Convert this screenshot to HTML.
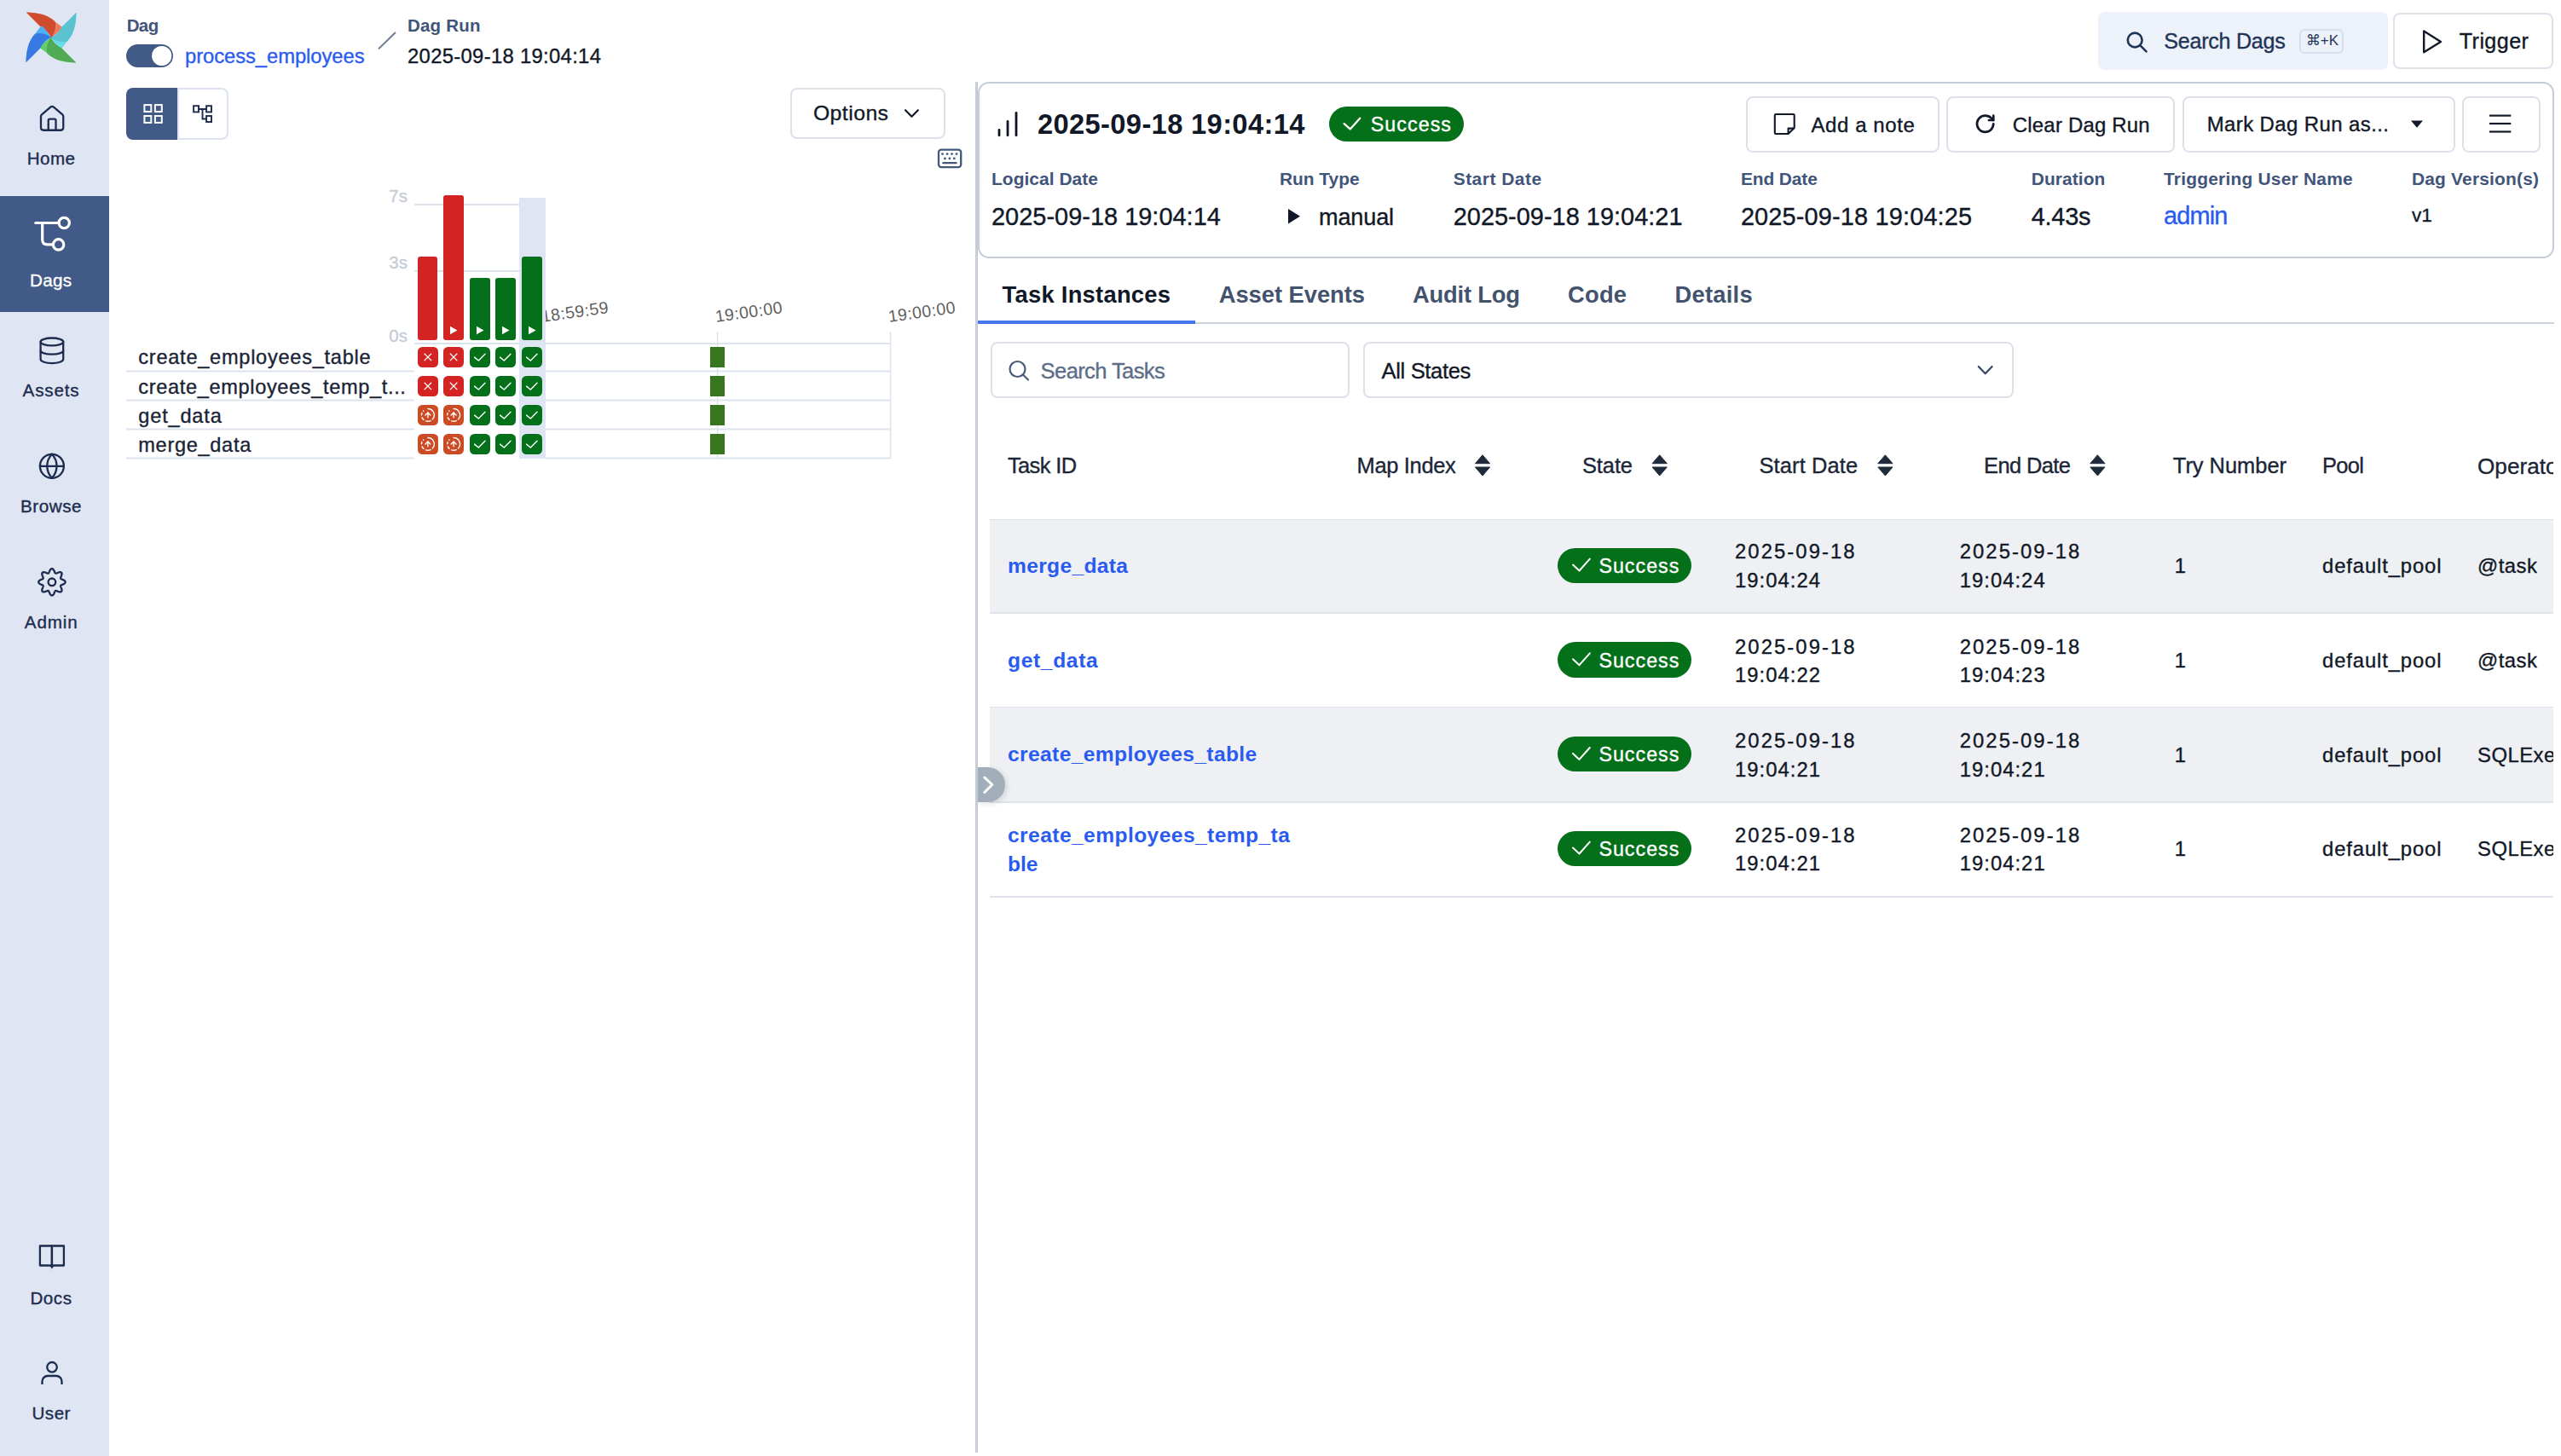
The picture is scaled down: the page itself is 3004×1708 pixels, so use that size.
<!DOCTYPE html>
<html><head><meta charset="utf-8"><title>Airflow - Dag Run</title>
<style>
html,body{margin:0;padding:0;}
body{width:3004px;height:1708px;position:relative;overflow:hidden;background:#ffffff;font-family:"Liberation Sans",sans-serif;}
.t{position:absolute;white-space:nowrap;}
.r{position:absolute;}
#clipwrap{position:absolute;left:0;top:0;width:2995px;height:1708px;overflow:hidden;}
svg.ov{position:absolute;left:0;top:0;}
</style></head><body>
<div class="r" style="left:0.00px;top:0.00px;width:128.00px;height:1708.00px;background:#dfe5f2;"></div>
<div class="r" style="left:0.00px;top:230.00px;width:128.00px;height:136.00px;background:#415a87;"></div>
<div class="t " style="left:31.80px;top:176.02px;font-size:20.64px;line-height:20.64px;letter-spacing:0.414px;color:#1c2c4e;-webkit-text-stroke:0.35px currentColor;">Home</div>
<div class="t " style="left:35.00px;top:319.02px;font-size:20.64px;line-height:20.64px;letter-spacing:0.272px;color:#ffffff;-webkit-text-stroke:0.35px currentColor;">Dags</div>
<div class="t " style="left:26.60px;top:447.92px;font-size:20.64px;line-height:20.64px;letter-spacing:0.812px;color:#1c2c4e;-webkit-text-stroke:0.35px currentColor;">Assets</div>
<div class="t " style="left:23.90px;top:584.32px;font-size:20.64px;line-height:20.64px;letter-spacing:0.575px;color:#1c2c4e;-webkit-text-stroke:0.35px currentColor;">Browse</div>
<div class="t " style="left:28.80px;top:720.32px;font-size:20.64px;line-height:20.64px;letter-spacing:0.874px;color:#1c2c4e;-webkit-text-stroke:0.35px currentColor;">Admin</div>
<div class="t " style="left:35.40px;top:1512.82px;font-size:20.64px;line-height:20.64px;letter-spacing:0.525px;color:#1c2c4e;-webkit-text-stroke:0.35px currentColor;">Docs</div>
<div class="t " style="left:37.50px;top:1648.32px;font-size:20.64px;line-height:20.64px;letter-spacing:0.474px;color:#1c2c4e;-webkit-text-stroke:0.35px currentColor;">User</div>
<svg class="ov" width="3004" height="1708" viewBox="0 0 3004 1708"><g transform="translate(30 14) rotate(0 30 30)"><path fill="#ee7d5f" d="M0.8 0.5 C14 0.6 27 3.5 34.6 11.4 L42.7 17.5 Q43.6 19 42.6 20.7 L30.2 30.2 C28.5 26 23 19.5 18.3 17.9 Z"/><path fill="#d14b2f" d="M0.8 0.5 C14 0.6 27 3.5 34.6 11.4 C36 17 34.6 24 30.2 30.2 C28.5 26 23 19.5 18.3 17.9 Z"/></g><g transform="translate(30 14) rotate(90 30 30)"><path fill="#66dde9" d="M0.8 0.5 C14 0.6 27 3.5 34.6 11.4 L42.7 17.5 Q43.6 19 42.6 20.7 L30.2 30.2 C28.5 26 23 19.5 18.3 17.9 Z"/><path fill="#5bc3d0" d="M0.8 0.5 C14 0.6 27 3.5 34.6 11.4 C36 17 34.6 24 30.2 30.2 C28.5 26 23 19.5 18.3 17.9 Z"/></g><g transform="translate(30 14) rotate(180 30 30)"><path fill="#63d067" d="M0.8 0.5 C14 0.6 27 3.5 34.6 11.4 L42.7 17.5 Q43.6 19 42.6 20.7 L30.2 30.2 C28.5 26 23 19.5 18.3 17.9 Z"/><path fill="#51aa55" d="M0.8 0.5 C14 0.6 27 3.5 34.6 11.4 C36 17 34.6 24 30.2 30.2 C28.5 26 23 19.5 18.3 17.9 Z"/></g><g transform="translate(30 14) rotate(270 30 30)"><path fill="#4fb0f6" d="M0.8 0.5 C14 0.6 27 3.5 34.6 11.4 L42.7 17.5 Q43.6 19 42.6 20.7 L30.2 30.2 C28.5 26 23 19.5 18.3 17.9 Z"/><path fill="#377ae4" d="M0.8 0.5 C14 0.6 27 3.5 34.6 11.4 C36 17 34.6 24 30.2 30.2 C28.5 26 23 19.5 18.3 17.9 Z"/></g><g transform="translate(43.6 122.1) scale(1.46)" fill="none" stroke="#1c2c4e" stroke-width="1.5753424657534245" stroke-linecap="round" stroke-linejoin="round"><path d="M15 21v-8a1 1 0 0 0-1-1h-4a1 1 0 0 0-1 1v8"/><path d="M3 10a2 2 0 0 1 .709-1.528l7-5.999a2 2 0 0 1 2.582 0l7 5.999A2 2 0 0 1 21 10v9a2 2 0 0 1-2 2H5a2 2 0 0 1-2-2z"/></g><g fill="none" stroke="#ffffff" stroke-width="3.2" stroke-linecap="round" stroke-linejoin="round"><path d="M41.8 261.5 H69"/><path d="M49.7 261.5 V281 Q49.7 286.9 55.6 286.9 H62.4"/><circle cx="75.2" cy="261.5" r="6.2"/><circle cx="68.6" cy="286.9" r="6.2"/></g><g transform="translate(43.17 393.54) scale(1.478)" fill="none" stroke="#1c2c4e" stroke-width="1.556" stroke-linecap="round" stroke-linejoin="round"><ellipse cx="12" cy="5" rx="9" ry="3"/><path d="M3 5V19A9 3 0 0 0 21 19V5"/><path d="M3 12A9 3 0 0 0 21 12"/></g><g transform="translate(44.10 530.00) scale(1.400)" fill="none" stroke="#1c2c4e" stroke-width="1.643" stroke-linecap="round" stroke-linejoin="round"><circle cx="12" cy="12" r="10"/><path d="M12 2a14.5 14.5 0 0 0 0 20 14.5 14.5 0 0 0 0-20"/><path d="M2 12h20"/></g><polygon points="60.90,667.10 61.17,667.12 61.44,667.20 61.71,667.32 61.97,667.49 62.22,667.70 62.46,667.94 62.69,668.22 62.91,668.53 63.11,668.86 63.30,669.21 63.47,669.57 63.64,669.93 63.79,670.29 63.93,670.63 64.07,670.97 64.20,671.28 64.33,671.57 64.47,671.83 64.60,672.05 64.74,672.24 64.90,672.39 65.06,672.50 65.24,672.58 65.44,672.61 65.65,672.61 65.88,672.58 66.14,672.52 66.41,672.43 66.71,672.32 67.02,672.19 67.36,672.05 67.71,671.91 68.07,671.76 68.44,671.62 68.82,671.50 69.19,671.38 69.57,671.29 69.94,671.23 70.30,671.19 70.65,671.19 70.97,671.21 71.27,671.28 71.55,671.38 71.79,671.52 72.00,671.70 72.18,671.91 72.32,672.15 72.42,672.43 72.49,672.73 72.51,673.05 72.51,673.40 72.47,673.76 72.41,674.13 72.32,674.51 72.20,674.88 72.08,675.26 71.94,675.63 71.79,675.99 71.65,676.34 71.51,676.67 71.38,676.99 71.27,677.29 71.18,677.56 71.12,677.82 71.09,678.05 71.09,678.26 71.12,678.46 71.20,678.64 71.31,678.80 71.46,678.96 71.65,679.10 71.87,679.23 72.13,679.37 72.42,679.50 72.73,679.63 73.07,679.77 73.41,679.91 73.77,680.06 74.13,680.23 74.49,680.40 74.84,680.59 75.17,680.79 75.48,681.01 75.76,681.24 76.00,681.48 76.21,681.73 76.38,681.99 76.50,682.26 76.58,682.53 76.60,682.80 76.58,683.07 76.50,683.34 76.38,683.61 76.21,683.87 76.00,684.12 75.76,684.36 75.48,684.59 75.17,684.81 74.84,685.01 74.49,685.20 74.13,685.37 73.77,685.54 73.41,685.69 73.07,685.83 72.73,685.97 72.42,686.10 72.13,686.23 71.87,686.37 71.65,686.50 71.46,686.64 71.31,686.80 71.20,686.96 71.12,687.14 71.09,687.34 71.09,687.55 71.12,687.78 71.18,688.04 71.27,688.31 71.38,688.61 71.51,688.92 71.65,689.26 71.79,689.61 71.94,689.97 72.08,690.34 72.20,690.72 72.32,691.09 72.41,691.47 72.47,691.84 72.51,692.20 72.51,692.55 72.49,692.87 72.42,693.17 72.32,693.45 72.18,693.69 72.00,693.90 71.79,694.08 71.55,694.22 71.27,694.32 70.97,694.39 70.65,694.41 70.30,694.41 69.94,694.37 69.57,694.31 69.19,694.22 68.82,694.10 68.44,693.98 68.07,693.84 67.71,693.69 67.36,693.55 67.02,693.41 66.71,693.28 66.41,693.17 66.14,693.08 65.88,693.02 65.65,692.99 65.44,692.99 65.24,693.02 65.06,693.10 64.90,693.21 64.74,693.36 64.60,693.55 64.47,693.77 64.33,694.03 64.20,694.32 64.07,694.63 63.93,694.97 63.79,695.31 63.64,695.67 63.47,696.03 63.30,696.39 63.11,696.74 62.91,697.07 62.69,697.38 62.46,697.66 62.22,697.90 61.97,698.11 61.71,698.28 61.44,698.40 61.17,698.48 60.90,698.50 60.63,698.48 60.36,698.40 60.09,698.28 59.83,698.11 59.58,697.90 59.34,697.66 59.11,697.38 58.89,697.07 58.69,696.74 58.50,696.39 58.33,696.03 58.16,695.67 58.01,695.31 57.87,694.97 57.73,694.63 57.60,694.32 57.47,694.03 57.33,693.77 57.20,693.55 57.06,693.36 56.90,693.21 56.74,693.10 56.56,693.02 56.36,692.99 56.15,692.99 55.92,693.02 55.66,693.08 55.39,693.17 55.09,693.28 54.77,693.41 54.44,693.55 54.09,693.69 53.73,693.84 53.36,693.98 52.98,694.10 52.61,694.22 52.23,694.31 51.86,694.37 51.50,694.41 51.15,694.41 50.83,694.39 50.53,694.32 50.25,694.22 50.01,694.08 49.80,693.90 49.62,693.69 49.48,693.45 49.38,693.17 49.31,692.87 49.29,692.55 49.29,692.20 49.33,691.84 49.39,691.47 49.48,691.09 49.60,690.72 49.72,690.34 49.86,689.97 50.01,689.61 50.15,689.26 50.29,688.92 50.42,688.61 50.53,688.31 50.62,688.04 50.68,687.78 50.71,687.55 50.71,687.34 50.68,687.14 50.60,686.96 50.49,686.80 50.34,686.64 50.15,686.50 49.93,686.37 49.67,686.23 49.38,686.10 49.07,685.97 48.73,685.83 48.39,685.69 48.03,685.54 47.67,685.37 47.31,685.20 46.96,685.01 46.63,684.81 46.32,684.59 46.04,684.36 45.80,684.12 45.59,683.87 45.42,683.61 45.30,683.34 45.22,683.07 45.20,682.80 45.22,682.53 45.30,682.26 45.42,681.99 45.59,681.73 45.80,681.48 46.04,681.24 46.32,681.01 46.63,680.79 46.96,680.59 47.31,680.40 47.67,680.23 48.03,680.06 48.39,679.91 48.73,679.77 49.07,679.63 49.38,679.50 49.67,679.37 49.93,679.23 50.15,679.10 50.34,678.96 50.49,678.80 50.60,678.64 50.68,678.46 50.71,678.26 50.71,678.05 50.68,677.82 50.62,677.56 50.53,677.29 50.42,676.99 50.29,676.67 50.15,676.34 50.01,675.99 49.86,675.63 49.72,675.26 49.60,674.88 49.48,674.51 49.39,674.13 49.33,673.76 49.29,673.40 49.29,673.05 49.31,672.73 49.38,672.43 49.48,672.15 49.62,671.91 49.80,671.70 50.01,671.52 50.25,671.38 50.53,671.28 50.83,671.21 51.15,671.19 51.50,671.19 51.86,671.23 52.23,671.29 52.61,671.38 52.98,671.50 53.36,671.62 53.73,671.76 54.09,671.91 54.44,672.05 54.77,672.19 55.09,672.32 55.39,672.43 55.66,672.52 55.92,672.58 56.15,672.61 56.36,672.61 56.56,672.58 56.74,672.50 56.90,672.39 57.06,672.24 57.20,672.05 57.33,671.83 57.47,671.57 57.60,671.28 57.73,670.97 57.87,670.63 58.01,670.29 58.16,669.93 58.33,669.57 58.50,669.21 58.69,668.86 58.89,668.53 59.11,668.22 59.34,667.94 59.58,667.70 59.83,667.49 60.09,667.32 60.36,667.20 60.63,667.12 60.90,667.10" fill="none" stroke="#1c2c4e" stroke-width="2.3" stroke-linejoin="round"/><circle cx="60.9" cy="682.8" r="4.3" fill="none" stroke="#1c2c4e" stroke-width="2.3"/><g fill="none" stroke="#1c2c4e" stroke-width="2.3" stroke-linejoin="round"><path d="M46.9 1461.5 H60.9 V1484.5 H46.9 Z"/><path d="M60.9 1461.5 H74.9 V1484.5 H60.9 Z"/></g><path d="M58.4 1485 L60.9 1488.5 L63.4 1485 Z" fill="#1c2c4e"/><g fill="none" stroke="#1c2c4e" stroke-width="2.3" stroke-linecap="butt"><circle cx="61" cy="1603.8" r="5.8"/><path d="M49.5 1624 V1620.5 A6.5 6.5 0 0 1 56 1614 H66 A6.5 6.5 0 0 1 72.5 1620.5 V1624"/></g></svg>
<div class="t " style="left:148.70px;top:20.45px;font-size:20.49px;line-height:20.49px;letter-spacing:-0.609px;color:#41547a;font-weight:700;">Dag</div>
<div class="t " style="left:478.00px;top:20.45px;font-size:20.49px;line-height:20.49px;letter-spacing:0.208px;color:#41547a;font-weight:700;">Dag Run</div>
<div class="r" style="left:148.00px;top:52.00px;width:55.00px;height:27.00px;background:#415a87;border-radius:14px;"></div>
<svg class="ov" width="3004" height="1708" viewBox="0 0 3004 1708"><circle cx="189.7" cy="65.5" r="11.6" fill="#ffffff"/></svg>
<div class="t " style="left:217.00px;top:53.65px;font-size:23.80px;line-height:23.80px;letter-spacing:-0.067px;color:#2a5bf0;-webkit-text-stroke:0.35px currentColor;">process_employees</div>
<svg class="ov" width="3004" height="1708" viewBox="0 0 3004 1708"><line x1="444" y1="57.4" x2="464" y2="38" stroke="#6b7a90" stroke-width="2"/></svg>
<div class="t " style="left:478.00px;top:53.62px;font-size:23.84px;line-height:23.84px;letter-spacing:0.314px;color:#111827;-webkit-text-stroke:0.35px currentColor;">2025-09-18 19:04:14</div>
<div class="r" style="left:148.00px;top:103.00px;width:61.00px;height:60.50px;background:#415a87;border-radius:8px 0 0 8px;"></div>
<div class="r" style="left:207.80px;top:103.00px;width:60.20px;height:60.50px;border:2px solid #dbe3f3;box-sizing:border-box;border-radius:0 8px 8px 0;border-left-width:2px;"></div>
<svg class="ov" width="3004" height="1708" viewBox="0 0 3004 1708"><rect x="169.4" y="123.1" width="7.9" height="7.9" fill="none" stroke="#fff" stroke-width="2"/><rect x="181.9" y="123.1" width="7.9" height="7.9" fill="none" stroke="#fff" stroke-width="2"/><rect x="169.4" y="136" width="7.9" height="7.9" fill="none" stroke="#fff" stroke-width="2"/><rect x="181.9" y="136" width="7.9" height="7.9" fill="none" stroke="#fff" stroke-width="2"/><g fill="none" stroke="#1c2c4e" stroke-width="1.9"><rect x="227.1" y="124.2" width="5.9" height="7.2"/><rect x="242.1" y="124.2" width="5.9" height="7.2"/><rect x="242.1" y="136" width="5.9" height="7"/><path d="M233 128 H242.1 M237.5 128 V139.5 H242.1"/></g></svg>
<div class="r" style="left:927.40px;top:103.40px;width:182.10px;height:60.00px;border:2px solid #dde2ea;box-sizing:border-box;border-radius:8px;"></div>
<div class="t " style="left:953.90px;top:120.88px;font-size:24.71px;line-height:24.71px;letter-spacing:0.491px;color:#111827;-webkit-text-stroke:0.35px currentColor;">Options</div>
<svg class="ov" width="3004" height="1708" viewBox="0 0 3004 1708"><path d="M1062 129.2 L1069.4 136.8 L1076.8 129.2" fill="none" stroke="#111827" stroke-width="2.2" stroke-linecap="round" stroke-linejoin="round"/><g fill="none" stroke="#41587a" stroke-width="2.3"><rect x="1101" y="175.7" width="26.2" height="20.4" rx="3"/><path d="M1106.3 191.2 H1121.6" stroke-linecap="round"/></g><circle cx="1105.5" cy="180.6" r="1.4" fill="#41587a"/><circle cx="1111.1" cy="180.6" r="1.4" fill="#41587a"/><circle cx="1116.5" cy="180.6" r="1.4" fill="#41587a"/><circle cx="1122" cy="180.6" r="1.4" fill="#41587a"/><circle cx="1108.4" cy="185.9" r="1.4" fill="#41587a"/><circle cx="1113.9" cy="185.9" r="1.4" fill="#41587a"/><circle cx="1119.3" cy="185.9" r="1.4" fill="#41587a"/></svg>
<div class="t " style="left:456.35px;top:220.34px;font-size:20.50px;line-height:20.50px;letter-spacing:0.000px;color:#c5ccd8;-webkit-text-stroke:0.35px currentColor;">7s</div>
<div class="t " style="left:456.35px;top:298.34px;font-size:20.50px;line-height:20.50px;letter-spacing:0.000px;color:#c5ccd8;-webkit-text-stroke:0.35px currentColor;">3s</div>
<div class="t " style="left:456.35px;top:383.54px;font-size:20.50px;line-height:20.50px;letter-spacing:0.000px;color:#c5ccd8;-webkit-text-stroke:0.35px currentColor;">0s</div>
<svg class="ov" width="3004" height="1708" viewBox="0 0 3004 1708"><line x1="486" y1="240" x2="609" y2="240" stroke="#dde3ec" stroke-width="2"/><line x1="486" y1="318" x2="609" y2="318" stroke="#dde3ec" stroke-width="2"/></svg>
<div class="t" style="left:635.5px;top:362.4px;font-size:19.6px;line-height:19.6px;color:#5f5f5f;transform-origin:0 16.6px;transform:rotate(-8deg);letter-spacing:0.4px">18:59:59</div>
<div class="t" style="left:840px;top:361.9px;font-size:19.6px;line-height:19.6px;color:#5f5f5f;transform-origin:0 16.6px;transform:rotate(-8deg);letter-spacing:0.4px">19:00:00</div>
<div class="t" style="left:1042.5px;top:361.9px;font-size:19.6px;line-height:19.6px;color:#5f5f5f;transform-origin:0 16.6px;transform:rotate(-8deg);letter-spacing:0.4px">19:00:00</div>
<div class="r" style="left:609.00px;top:232.00px;width:30.50px;height:306.00px;background:#dfe5f2;"></div>
<div class="r" style="left:490.00px;top:301.00px;width:23.00px;height:97.80px;background:#d42323;border-radius:3px;"></div>
<div class="r" style="left:520.00px;top:229.00px;width:24.00px;height:169.80px;background:#d42323;border-radius:3px;"></div>
<svg class="ov" width="3004" height="1708" viewBox="0 0 3004 1708"><path d="M528.0 382.8 L536.5 387.5 L528.0 392.2 Z" fill="#fff"/></svg>
<div class="r" style="left:551.00px;top:326.00px;width:24.00px;height:72.80px;background:#05701a;border-radius:3px;"></div>
<svg class="ov" width="3004" height="1708" viewBox="0 0 3004 1708"><path d="M559.0 382.8 L567.5 387.5 L559.0 392.2 Z" fill="#fff"/></svg>
<div class="r" style="left:581.00px;top:326.00px;width:24.00px;height:72.80px;background:#05701a;border-radius:3px;"></div>
<svg class="ov" width="3004" height="1708" viewBox="0 0 3004 1708"><path d="M589.0 382.8 L597.5 387.5 L589.0 392.2 Z" fill="#fff"/></svg>
<div class="r" style="left:612.00px;top:301.00px;width:24.00px;height:97.80px;background:#05701a;border-radius:3px;"></div>
<svg class="ov" width="3004" height="1708" viewBox="0 0 3004 1708"><path d="M620.0 382.8 L628.5 387.5 L620.0 392.2 Z" fill="#fff"/><line x1="486" y1="403" x2="609" y2="403" stroke="#dde3ec" stroke-width="2"/><line x1="639.5" y1="403" x2="1045" y2="403" stroke="#dde3ec" stroke-width="2"/><line x1="148" y1="435.5" x2="486" y2="435.5" stroke="#dde3ec" stroke-width="2"/><line x1="639.5" y1="435.5" x2="1045" y2="435.5" stroke="#dde3ec" stroke-width="2"/><line x1="148" y1="469.5" x2="486" y2="469.5" stroke="#dde3ec" stroke-width="2"/><line x1="639.5" y1="469.5" x2="1045" y2="469.5" stroke="#dde3ec" stroke-width="2"/><line x1="148" y1="503.5" x2="486" y2="503.5" stroke="#dde3ec" stroke-width="2"/><line x1="639.5" y1="503.5" x2="1045" y2="503.5" stroke="#dde3ec" stroke-width="2"/><line x1="148" y1="537.5" x2="486" y2="537.5" stroke="#dde3ec" stroke-width="2"/><line x1="639.5" y1="537.5" x2="1045" y2="537.5" stroke="#dde3ec" stroke-width="2"/><line x1="841.6" y1="389" x2="841.6" y2="537" stroke="#dde3ec" stroke-width="1.5"/><line x1="1044.5" y1="389" x2="1044.5" y2="537" stroke="#dde3ec" stroke-width="1.5"/></svg>
<div class="t " style="left:162.30px;top:408.02px;font-size:23.60px;line-height:23.60px;letter-spacing:0.726px;color:#1a2436;-webkit-text-stroke:0.35px currentColor;">create_employees_table</div>
<div class="t " style="left:162.30px;top:442.52px;font-size:23.60px;line-height:23.60px;letter-spacing:0.636px;color:#1a2436;-webkit-text-stroke:0.35px currentColor;">create_employees_temp_t...</div>
<div class="t " style="left:162.30px;top:476.62px;font-size:23.60px;line-height:23.60px;letter-spacing:0.805px;color:#1a2436;-webkit-text-stroke:0.35px currentColor;">get_data</div>
<div class="t " style="left:162.30px;top:510.72px;font-size:23.60px;line-height:23.60px;letter-spacing:0.672px;color:#1a2436;-webkit-text-stroke:0.35px currentColor;">merge_data</div>
<div class="r" style="left:490.00px;top:407.00px;width:23.80px;height:23.80px;background:#d42323;border-radius:5.5px;"></div>
<svg class="ov" width="3004" height="1708" viewBox="0 0 3004 1708"><path d="M497.7 414.7 L506.1 423.1 M506.1 414.7 L497.7 423.1" stroke="#fff" stroke-width="1.3" fill="none"/></svg>
<div class="r" style="left:520.20px;top:407.00px;width:23.80px;height:23.80px;background:#d42323;border-radius:5.5px;"></div>
<svg class="ov" width="3004" height="1708" viewBox="0 0 3004 1708"><path d="M527.9 414.7 L536.3 423.1 M536.3 414.7 L527.9 423.1" stroke="#fff" stroke-width="1.3" fill="none"/></svg>
<div class="r" style="left:551.00px;top:407.00px;width:23.80px;height:23.80px;background:#05701a;border-radius:5.5px;"></div>
<svg class="ov" width="3004" height="1708" viewBox="0 0 3004 1708"><path d="M556.6 419.1 L561.3 423.0 L569.0 415.3" stroke="#fff" stroke-width="1.4" fill="none" stroke-linecap="round" stroke-linejoin="round"/></svg>
<div class="r" style="left:581.00px;top:407.00px;width:23.80px;height:23.80px;background:#05701a;border-radius:5.5px;"></div>
<svg class="ov" width="3004" height="1708" viewBox="0 0 3004 1708"><path d="M586.6 419.1 L591.3 423.0 L599.0 415.3" stroke="#fff" stroke-width="1.4" fill="none" stroke-linecap="round" stroke-linejoin="round"/></svg>
<div class="r" style="left:612.00px;top:407.00px;width:23.80px;height:23.80px;background:#05701a;border-radius:5.5px;"></div>
<svg class="ov" width="3004" height="1708" viewBox="0 0 3004 1708"><path d="M617.6 419.1 L622.3 423.0 L630.0 415.3" stroke="#fff" stroke-width="1.4" fill="none" stroke-linecap="round" stroke-linejoin="round"/></svg>
<div class="r" style="left:490.00px;top:441.00px;width:23.80px;height:23.80px;background:#d42323;border-radius:5.5px;"></div>
<svg class="ov" width="3004" height="1708" viewBox="0 0 3004 1708"><path d="M497.7 448.7 L506.1 457.1 M506.1 448.7 L497.7 457.1" stroke="#fff" stroke-width="1.3" fill="none"/></svg>
<div class="r" style="left:520.20px;top:441.00px;width:23.80px;height:23.80px;background:#d42323;border-radius:5.5px;"></div>
<svg class="ov" width="3004" height="1708" viewBox="0 0 3004 1708"><path d="M527.9 448.7 L536.3 457.1 M536.3 448.7 L527.9 457.1" stroke="#fff" stroke-width="1.3" fill="none"/></svg>
<div class="r" style="left:551.00px;top:441.00px;width:23.80px;height:23.80px;background:#05701a;border-radius:5.5px;"></div>
<svg class="ov" width="3004" height="1708" viewBox="0 0 3004 1708"><path d="M556.6 453.1 L561.3 457.0 L569.0 449.3" stroke="#fff" stroke-width="1.4" fill="none" stroke-linecap="round" stroke-linejoin="round"/></svg>
<div class="r" style="left:581.00px;top:441.00px;width:23.80px;height:23.80px;background:#05701a;border-radius:5.5px;"></div>
<svg class="ov" width="3004" height="1708" viewBox="0 0 3004 1708"><path d="M586.6 453.1 L591.3 457.0 L599.0 449.3" stroke="#fff" stroke-width="1.4" fill="none" stroke-linecap="round" stroke-linejoin="round"/></svg>
<div class="r" style="left:612.00px;top:441.00px;width:23.80px;height:23.80px;background:#05701a;border-radius:5.5px;"></div>
<svg class="ov" width="3004" height="1708" viewBox="0 0 3004 1708"><path d="M617.6 453.1 L622.3 457.0 L630.0 449.3" stroke="#fff" stroke-width="1.4" fill="none" stroke-linecap="round" stroke-linejoin="round"/></svg>
<div class="r" style="left:490.00px;top:475.00px;width:23.80px;height:23.80px;background:#cc4b24;border-radius:5.5px;"></div>
<svg class="ov" width="3004" height="1708" viewBox="0 0 3004 1708"><g transform="translate(493.02 478.02) scale(0.74)" fill="none" stroke="#fff" stroke-width="1.9" stroke-linecap="round" stroke-linejoin="round"><path d="M12 2a10 10 0 0 1 7.38 16.75"/><path d="m16 12-4-4-4 4"/><path d="M12 16V8"/><path d="M2.5 8.875a10 10 0 0 0-.5 3"/><path d="M2.83 16a10 10 0 0 0 2.43 3.4"/><path d="M4.636 5.235a.5.5 0 0 1 .5.5"/><path d="M8.644 21.42a10 10 0 0 0 7.631-.38"/></g></svg>
<div class="r" style="left:520.20px;top:475.00px;width:23.80px;height:23.80px;background:#cc4b24;border-radius:5.5px;"></div>
<svg class="ov" width="3004" height="1708" viewBox="0 0 3004 1708"><g transform="translate(523.22 478.02) scale(0.74)" fill="none" stroke="#fff" stroke-width="1.9" stroke-linecap="round" stroke-linejoin="round"><path d="M12 2a10 10 0 0 1 7.38 16.75"/><path d="m16 12-4-4-4 4"/><path d="M12 16V8"/><path d="M2.5 8.875a10 10 0 0 0-.5 3"/><path d="M2.83 16a10 10 0 0 0 2.43 3.4"/><path d="M4.636 5.235a.5.5 0 0 1 .5.5"/><path d="M8.644 21.42a10 10 0 0 0 7.631-.38"/></g></svg>
<div class="r" style="left:551.00px;top:475.00px;width:23.80px;height:23.80px;background:#05701a;border-radius:5.5px;"></div>
<svg class="ov" width="3004" height="1708" viewBox="0 0 3004 1708"><path d="M556.6 487.1 L561.3 491.0 L569.0 483.3" stroke="#fff" stroke-width="1.4" fill="none" stroke-linecap="round" stroke-linejoin="round"/></svg>
<div class="r" style="left:581.00px;top:475.00px;width:23.80px;height:23.80px;background:#05701a;border-radius:5.5px;"></div>
<svg class="ov" width="3004" height="1708" viewBox="0 0 3004 1708"><path d="M586.6 487.1 L591.3 491.0 L599.0 483.3" stroke="#fff" stroke-width="1.4" fill="none" stroke-linecap="round" stroke-linejoin="round"/></svg>
<div class="r" style="left:612.00px;top:475.00px;width:23.80px;height:23.80px;background:#05701a;border-radius:5.5px;"></div>
<svg class="ov" width="3004" height="1708" viewBox="0 0 3004 1708"><path d="M617.6 487.1 L622.3 491.0 L630.0 483.3" stroke="#fff" stroke-width="1.4" fill="none" stroke-linecap="round" stroke-linejoin="round"/></svg>
<div class="r" style="left:490.00px;top:509.00px;width:23.80px;height:23.80px;background:#cc4b24;border-radius:5.5px;"></div>
<svg class="ov" width="3004" height="1708" viewBox="0 0 3004 1708"><g transform="translate(493.02 512.02) scale(0.74)" fill="none" stroke="#fff" stroke-width="1.9" stroke-linecap="round" stroke-linejoin="round"><path d="M12 2a10 10 0 0 1 7.38 16.75"/><path d="m16 12-4-4-4 4"/><path d="M12 16V8"/><path d="M2.5 8.875a10 10 0 0 0-.5 3"/><path d="M2.83 16a10 10 0 0 0 2.43 3.4"/><path d="M4.636 5.235a.5.5 0 0 1 .5.5"/><path d="M8.644 21.42a10 10 0 0 0 7.631-.38"/></g></svg>
<div class="r" style="left:520.20px;top:509.00px;width:23.80px;height:23.80px;background:#cc4b24;border-radius:5.5px;"></div>
<svg class="ov" width="3004" height="1708" viewBox="0 0 3004 1708"><g transform="translate(523.22 512.02) scale(0.74)" fill="none" stroke="#fff" stroke-width="1.9" stroke-linecap="round" stroke-linejoin="round"><path d="M12 2a10 10 0 0 1 7.38 16.75"/><path d="m16 12-4-4-4 4"/><path d="M12 16V8"/><path d="M2.5 8.875a10 10 0 0 0-.5 3"/><path d="M2.83 16a10 10 0 0 0 2.43 3.4"/><path d="M4.636 5.235a.5.5 0 0 1 .5.5"/><path d="M8.644 21.42a10 10 0 0 0 7.631-.38"/></g></svg>
<div class="r" style="left:551.00px;top:509.00px;width:23.80px;height:23.80px;background:#05701a;border-radius:5.5px;"></div>
<svg class="ov" width="3004" height="1708" viewBox="0 0 3004 1708"><path d="M556.6 521.1 L561.3 525.0 L569.0 517.3" stroke="#fff" stroke-width="1.4" fill="none" stroke-linecap="round" stroke-linejoin="round"/></svg>
<div class="r" style="left:581.00px;top:509.00px;width:23.80px;height:23.80px;background:#05701a;border-radius:5.5px;"></div>
<svg class="ov" width="3004" height="1708" viewBox="0 0 3004 1708"><path d="M586.6 521.1 L591.3 525.0 L599.0 517.3" stroke="#fff" stroke-width="1.4" fill="none" stroke-linecap="round" stroke-linejoin="round"/></svg>
<div class="r" style="left:612.00px;top:509.00px;width:23.80px;height:23.80px;background:#05701a;border-radius:5.5px;"></div>
<svg class="ov" width="3004" height="1708" viewBox="0 0 3004 1708"><path d="M617.6 521.1 L622.3 525.0 L630.0 517.3" stroke="#fff" stroke-width="1.4" fill="none" stroke-linecap="round" stroke-linejoin="round"/></svg>
<div class="r" style="left:832.70px;top:407.00px;width:17.30px;height:24.40px;background:#37761f;"></div>
<div class="r" style="left:832.70px;top:441.00px;width:17.30px;height:24.40px;background:#37761f;"></div>
<div class="r" style="left:832.70px;top:475.00px;width:17.30px;height:24.40px;background:#37761f;"></div>
<div class="r" style="left:832.70px;top:509.00px;width:17.30px;height:24.40px;background:#37761f;"></div>
<div class="r" style="left:1144.00px;top:96.00px;width:3.00px;height:1608.00px;background:#c5cdd8;"></div>
<div class="r" style="left:1146.50px;top:96.00px;width:1849.50px;height:206.50px;border:2px solid #c6cdd9;box-sizing:border-box;border-radius:13px;"></div>
<svg class="ov" width="3004" height="1708" viewBox="0 0 3004 1708"><g stroke="#0f1523" stroke-width="2.8" stroke-linecap="round"><line x1="1172" y1="152.5" x2="1172" y2="158.8"/><line x1="1182" y1="142.5" x2="1182" y2="158.8"/><line x1="1192" y1="132.5" x2="1192" y2="158.8"/></g></svg>
<div class="t " style="left:1217.00px;top:129.81px;font-size:32.70px;line-height:32.70px;letter-spacing:0.345px;color:#111827;font-weight:700;">2025-09-18 19:04:14</div>
<div class="r" style="left:1558.80px;top:124.80px;width:158.00px;height:41.20px;background:#05701a;border-radius:21px;"></div>
<svg class="ov" width="3004" height="1708" viewBox="0 0 3004 1708"><path d="M1576.6 145.1 L1583.7 151.4 L1595.2 138.7" stroke="#fff" stroke-width="2.3" fill="none" stroke-linecap="round" stroke-linejoin="round"/></svg>
<div class="t " style="left:1607.80px;top:135.11px;font-size:23.26px;line-height:23.26px;letter-spacing:1.051px;color:#ffffff;-webkit-text-stroke:0.35px currentColor;">Success</div>
<div class="t " style="left:1163.00px;top:199.78px;font-size:20.93px;line-height:20.93px;letter-spacing:0.050px;color:#41547a;font-weight:700;">Logical Date</div>
<div class="t " style="left:1501.00px;top:199.78px;font-size:20.93px;line-height:20.93px;letter-spacing:-0.029px;color:#41547a;font-weight:700;">Run Type</div>
<div class="t " style="left:1704.70px;top:199.78px;font-size:20.93px;line-height:20.93px;letter-spacing:0.503px;color:#41547a;font-weight:700;">Start Date</div>
<div class="t " style="left:2041.90px;top:199.78px;font-size:20.93px;line-height:20.93px;letter-spacing:-0.102px;color:#41547a;font-weight:700;">End Date</div>
<div class="t " style="left:2382.80px;top:199.78px;font-size:20.93px;line-height:20.93px;letter-spacing:0.080px;color:#41547a;font-weight:700;">Duration</div>
<div class="t " style="left:2538.00px;top:199.78px;font-size:20.93px;line-height:20.93px;letter-spacing:0.220px;color:#41547a;font-weight:700;">Triggering User Name</div>
<div class="t " style="left:2829.00px;top:199.78px;font-size:20.93px;line-height:20.93px;letter-spacing:0.188px;color:#41547a;font-weight:700;">Dag Version(s)</div>
<div class="t " style="left:1163.00px;top:239.51px;font-size:28.92px;line-height:28.92px;letter-spacing:0.023px;color:#111827;-webkit-text-stroke:0.35px currentColor;">2025-09-18 19:04:14</div>
<div class="t " style="left:1704.70px;top:239.51px;font-size:28.92px;line-height:28.92px;letter-spacing:0.023px;color:#111827;-webkit-text-stroke:0.35px currentColor;">2025-09-18 19:04:21</div>
<div class="t " style="left:2041.90px;top:239.51px;font-size:28.92px;line-height:28.92px;letter-spacing:0.156px;color:#111827;-webkit-text-stroke:0.35px currentColor;">2025-09-18 19:04:25</div>
<div class="t " style="left:2382.80px;top:239.51px;font-size:28.92px;line-height:28.92px;letter-spacing:-0.265px;color:#111827;-webkit-text-stroke:0.35px currentColor;">4.43s</div>
<div class="t " style="left:1547.00px;top:241.05px;font-size:27.10px;line-height:27.10px;letter-spacing:-0.157px;color:#111827;-webkit-text-stroke:0.35px currentColor;">manual</div>
<div class="t " style="left:2538.00px;top:239.21px;font-size:28.92px;line-height:28.92px;letter-spacing:-0.821px;color:#2a5bf0;-webkit-text-stroke:0.35px currentColor;">admin</div>
<div class="t " style="left:2829.00px;top:241.10px;font-size:22.67px;line-height:22.67px;letter-spacing:0.000px;color:#111827;-webkit-text-stroke:0.35px currentColor;">v1</div>
<svg class="ov" width="3004" height="1708" viewBox="0 0 3004 1708"><path d="M1511 245 L1525 253.7 L1511 262.4 Z" fill="#111827"/></svg>
<div class="r" style="left:2047.80px;top:112.90px;width:227.00px;height:66.10px;border:2px solid #dde2ea;box-sizing:border-box;border-radius:8px;"></div>
<div class="r" style="left:2283.40px;top:112.90px;width:268.10px;height:66.10px;border:2px solid #dde2ea;box-sizing:border-box;border-radius:8px;"></div>
<div class="r" style="left:2559.70px;top:112.90px;width:320.30px;height:66.10px;border:2px solid #dde2ea;box-sizing:border-box;border-radius:8px;"></div>
<div class="r" style="left:2888.00px;top:112.90px;width:91.50px;height:66.10px;border:2px solid #dde2ea;box-sizing:border-box;border-radius:8px;"></div>
<div class="t " style="left:2124.50px;top:134.89px;font-size:23.98px;line-height:23.98px;letter-spacing:0.587px;color:#111827;-webkit-text-stroke:0.35px currentColor;">Add a note</div>
<div class="t " style="left:2360.80px;top:134.89px;font-size:23.98px;line-height:23.98px;letter-spacing:0.197px;color:#111827;-webkit-text-stroke:0.35px currentColor;">Clear Dag Run</div>
<div class="t " style="left:2588.70px;top:134.49px;font-size:23.98px;line-height:23.98px;letter-spacing:0.400px;color:#111827;-webkit-text-stroke:0.35px currentColor;">Mark Dag Run as...</div>
<svg class="ov" width="3004" height="1708" viewBox="0 0 3004 1708"><g fill="none" stroke="#111827" stroke-width="2.1" stroke-linejoin="round"><path d="M2083 134 H2103.5 A1.2 1.2 0 0 1 2104.7 135.2 V150 L2097.6 157 H2083 A1.2 1.2 0 0 1 2081.8 155.8 V135.2 A1.2 1.2 0 0 1 2083 134 Z"/><path d="M2097.6 157 V150.6 H2104.7"/></g><g transform="translate(2315.76 132.46) scale(1.07)" fill="none" stroke="#111827" stroke-width="2.523" stroke-linecap="round" stroke-linejoin="round"><path d="M21 12a9 9 0 1 1-9-9c2.52 0 4.93 1 6.74 2.74L21 8"/><path d="M21 3v5h-5"/></g><path d="M2828 141.5 H2842 L2835 149.8 Z" fill="#111827"/><g stroke="#111827" stroke-width="2.2"><line x1="2920" y1="135.6" x2="2945.3" y2="135.6"/><line x1="2920" y1="145" x2="2945.3" y2="145"/><line x1="2920" y1="154.5" x2="2945.3" y2="154.5"/></g></svg>
<div class="r" style="left:2461.00px;top:14.00px;width:340.00px;height:67.80px;background:#edf1f9;border-radius:8px;"></div>
<svg class="ov" width="3004" height="1708" viewBox="0 0 3004 1708"><g fill="none" stroke="#1f3456" stroke-width="2.6" stroke-linecap="round"><circle cx="2504.2" cy="47" r="8.4"/><line x1="2510.5" y1="53.3" x2="2517.5" y2="60.3"/></g></svg>
<div class="t " style="left:2538.30px;top:36.01px;font-size:25.15px;line-height:25.15px;letter-spacing:-0.286px;color:#1f3456;-webkit-text-stroke:0.35px currentColor;">Search Dags</div>
<div class="r" style="left:2696.60px;top:33.50px;width:52.40px;height:29.70px;border:2px solid #d5dff0;box-sizing:border-box;border-radius:6px;"></div>
<div class="t" style="left:2704.5px;top:38px;font-size:17px;line-height:20px;color:#1f3456;letter-spacing:0.2px">&#8984;+K</div>
<div class="r" style="left:2807.30px;top:14.70px;width:188.20px;height:66.40px;border:2px solid #dde2ea;box-sizing:border-box;border-radius:8px;"></div>
<svg class="ov" width="3004" height="1708" viewBox="0 0 3004 1708"><path d="M2843.2 36.5 L2863 48.9 L2843.2 61.3 Z" fill="none" stroke="#111827" stroke-width="2.4" stroke-linejoin="round"/></svg>
<div class="t " style="left:2884.80px;top:36.01px;font-size:25.15px;line-height:25.15px;letter-spacing:0.397px;color:#111827;-webkit-text-stroke:0.35px currentColor;">Trigger</div>
<div class="t " style="left:1175.60px;top:331.86px;font-size:27.33px;line-height:27.33px;letter-spacing:0.268px;color:#111827;font-weight:700;">Task Instances</div>
<div class="t " style="left:1429.70px;top:331.86px;font-size:27.33px;line-height:27.33px;letter-spacing:-0.030px;color:#43536e;font-weight:700;">Asset Events</div>
<div class="t " style="left:1657.00px;top:331.86px;font-size:27.33px;line-height:27.33px;letter-spacing:-0.185px;color:#43536e;font-weight:700;">Audit Log</div>
<div class="t " style="left:1839.00px;top:331.86px;font-size:27.33px;line-height:27.33px;letter-spacing:0.228px;color:#43536e;font-weight:700;">Code</div>
<div class="t " style="left:1964.60px;top:331.86px;font-size:27.33px;line-height:27.33px;letter-spacing:0.232px;color:#43536e;font-weight:700;">Details</div>
<div class="r" style="left:1147.00px;top:378.30px;width:1849.00px;height:2.00px;background:#ccd3dd;"></div>
<div class="r" style="left:1147.00px;top:375.60px;width:254.60px;height:4.90px;background:#4477ee;"></div>
<div class="r" style="left:1161.70px;top:400.70px;width:421.70px;height:66.70px;border:2px solid #dde2ea;box-sizing:border-box;border-radius:8px;"></div>
<svg class="ov" width="3004" height="1708" viewBox="0 0 3004 1708"><g fill="none" stroke="#4a5b78" stroke-width="2.2" stroke-linecap="round"><circle cx="1193.5" cy="433" r="9"/><line x1="1200.2" y1="439.7" x2="1206" y2="445.5"/></g></svg>
<div class="t " style="left:1220.60px;top:422.64px;font-size:25.58px;line-height:25.58px;letter-spacing:-0.627px;color:#5d6d88;-webkit-text-stroke:0.35px currentColor;">Search Tasks</div>
<div class="r" style="left:1598.70px;top:401.00px;width:763.30px;height:65.50px;border:2px solid #dde2ea;box-sizing:border-box;border-radius:8px;"></div>
<div class="t " style="left:1620.60px;top:422.94px;font-size:25.58px;line-height:25.58px;letter-spacing:-0.373px;color:#111827;-webkit-text-stroke:0.35px currentColor;">All States</div>
<svg class="ov" width="3004" height="1708" viewBox="0 0 3004 1708"><path d="M2320.8 430 L2328.7 438.3 L2336.6 430" fill="none" stroke="#344560" stroke-width="2.2" stroke-linecap="round" stroke-linejoin="round"/></svg>
<div class="t " style="left:1182.00px;top:534.46px;font-size:25.44px;line-height:25.44px;letter-spacing:-0.634px;color:#1b2536;-webkit-text-stroke:0.35px currentColor;">Task ID</div>
<div class="t " style="left:1591.60px;top:534.46px;font-size:25.44px;line-height:25.44px;letter-spacing:-0.322px;color:#1b2536;-webkit-text-stroke:0.35px currentColor;">Map Index</div>
<svg class="ov" width="3004" height="1708" viewBox="0 0 3004 1708"><path d="M1739 533.8 L1747.6 543.7 H1730.4 Z M1730.4 548 H1747.6 L1739 558 Z" fill="#1f2a3a" stroke="#1f2a3a" stroke-width="1" stroke-linejoin="round"/></svg>
<div class="t " style="left:1856.00px;top:534.46px;font-size:25.44px;line-height:25.44px;letter-spacing:-0.098px;color:#1b2536;-webkit-text-stroke:0.35px currentColor;">State</div>
<svg class="ov" width="3004" height="1708" viewBox="0 0 3004 1708"><path d="M1946.7 533.8 L1955.3 543.7 H1938.1000000000001 Z M1938.1000000000001 548 H1955.3 L1946.7 558 Z" fill="#1f2a3a" stroke="#1f2a3a" stroke-width="1" stroke-linejoin="round"/></svg>
<div class="t " style="left:2063.50px;top:534.46px;font-size:25.44px;line-height:25.44px;letter-spacing:0.121px;color:#1b2536;-webkit-text-stroke:0.35px currentColor;">Start Date</div>
<svg class="ov" width="3004" height="1708" viewBox="0 0 3004 1708"><path d="M2211.4 533.8 L2220.0 543.7 H2202.8 Z M2202.8 548 H2220.0 L2211.4 558 Z" fill="#1f2a3a" stroke="#1f2a3a" stroke-width="1" stroke-linejoin="round"/></svg>
<div class="t " style="left:2327.00px;top:534.46px;font-size:25.44px;line-height:25.44px;letter-spacing:-0.579px;color:#1b2536;-webkit-text-stroke:0.35px currentColor;">End Date</div>
<svg class="ov" width="3004" height="1708" viewBox="0 0 3004 1708"><path d="M2460.4 533.8 L2469.0 543.7 H2451.8 Z M2451.8 548 H2469.0 L2460.4 558 Z" fill="#1f2a3a" stroke="#1f2a3a" stroke-width="1" stroke-linejoin="round"/></svg>
<div class="t " style="left:2548.80px;top:534.46px;font-size:25.44px;line-height:25.44px;letter-spacing:-0.013px;color:#1b2536;-webkit-text-stroke:0.35px currentColor;">Try Number</div>
<div class="t " style="left:2724.00px;top:534.46px;font-size:25.44px;line-height:25.44px;letter-spacing:-0.637px;color:#1b2536;-webkit-text-stroke:0.35px currentColor;">Pool</div>
<div class="r" style="left:2906px;top:520px;width:89px;height:50px;overflow:hidden">
<div class="t " style="left:0.00px;top:13.85px;font-size:26.16px;line-height:26.16px;letter-spacing:0.000px;color:#1b2536;-webkit-text-stroke:0.35px currentColor;">Operator</div>
</div>
<div class="r" style="left:1161.00px;top:609.40px;width:1834.00px;height:109.30px;background:#eef0f4;"></div>
<div class="r" style="left:1161.00px;top:717.70px;width:1834.00px;height:2.00px;background:#dfe3ea;"></div>
<div class="r" style="left:1161.00px;top:828.50px;width:1834.00px;height:2.00px;background:#dfe3ea;"></div>
<div class="r" style="left:1161.00px;top:829.50px;width:1834.00px;height:111.20px;background:#eef0f4;"></div>
<div class="r" style="left:1161.00px;top:939.70px;width:1834.00px;height:2.00px;background:#dfe3ea;"></div>
<div class="r" style="left:1161.00px;top:1051.40px;width:1834.00px;height:2.00px;background:#dfe3ea;"></div>
<div class="r" style="left:1161.00px;top:608.60px;width:1834.00px;height:1.30px;background:#dfe3ea;"></div>
<div class="t " style="left:1182.00px;top:652.17px;font-size:24.60px;line-height:24.60px;letter-spacing:0.322px;color:#2a5bf0;font-weight:700;">merge_data</div>
<div class="r" style="left:1826.60px;top:643.00px;width:157.90px;height:40.50px;background:#05701a;border-radius:21px;"></div>
<svg class="ov" width="3004" height="1708" viewBox="0 0 3004 1708"><path d="M1845.0 662.6 L1852.5 669.5 L1864.8 655.6" stroke="#fff" stroke-width="2.0" fill="none" stroke-linecap="round" stroke-linejoin="round"/></svg>
<div class="t " style="left:1875.40px;top:652.86px;font-size:23.26px;line-height:23.26px;letter-spacing:1.018px;color:#ffffff;-webkit-text-stroke:0.35px currentColor;">Success</div>
<div class="t " style="left:2035.00px;top:634.82px;font-size:23.84px;line-height:23.84px;letter-spacing:2.074px;color:#111827;-webkit-text-stroke:0.35px currentColor;">2025-09-18</div>
<div class="t " style="left:2035.00px;top:668.82px;font-size:23.84px;line-height:23.84px;letter-spacing:1.030px;color:#111827;-webkit-text-stroke:0.35px currentColor;">19:04:24</div>
<div class="t " style="left:2298.70px;top:634.82px;font-size:23.84px;line-height:23.84px;letter-spacing:2.074px;color:#111827;-webkit-text-stroke:0.35px currentColor;">2025-09-18</div>
<div class="t " style="left:2298.70px;top:668.82px;font-size:23.84px;line-height:23.84px;letter-spacing:1.030px;color:#111827;-webkit-text-stroke:0.35px currentColor;">19:04:24</div>
<div class="t " style="left:2550.80px;top:651.82px;font-size:23.84px;line-height:23.84px;letter-spacing:0.000px;color:#111827;-webkit-text-stroke:0.35px currentColor;">1</div>
<div class="t " style="left:2724.00px;top:651.82px;font-size:23.84px;line-height:23.84px;letter-spacing:0.882px;color:#111827;-webkit-text-stroke:0.35px currentColor;">default_pool</div>
<div class="r" style="left:2906px;top:642px;width:89px;height:40px;overflow:hidden">
<div class="t " style="left:0.00px;top:9.82px;font-size:23.84px;line-height:23.84px;letter-spacing:0.000px;color:#111827;-webkit-text-stroke:0.35px currentColor;letter-spacing:0.5px;">@task</div>
</div>
<div class="t " style="left:1182.00px;top:763.47px;font-size:24.60px;line-height:24.60px;letter-spacing:0.647px;color:#2a5bf0;font-weight:700;">get_data</div>
<div class="r" style="left:1826.60px;top:753.00px;width:157.90px;height:41.80px;background:#05701a;border-radius:21px;"></div>
<svg class="ov" width="3004" height="1708" viewBox="0 0 3004 1708"><path d="M1845.0 773.2 L1852.5 780.2 L1864.8 766.3" stroke="#fff" stroke-width="2.0" fill="none" stroke-linecap="round" stroke-linejoin="round"/></svg>
<div class="t " style="left:1875.40px;top:763.51px;font-size:23.26px;line-height:23.26px;letter-spacing:1.018px;color:#ffffff;-webkit-text-stroke:0.35px currentColor;">Success</div>
<div class="t " style="left:2035.00px;top:746.82px;font-size:23.84px;line-height:23.84px;letter-spacing:2.074px;color:#111827;-webkit-text-stroke:0.35px currentColor;">2025-09-18</div>
<div class="t " style="left:2035.00px;top:780.22px;font-size:23.84px;line-height:23.84px;letter-spacing:1.030px;color:#111827;-webkit-text-stroke:0.35px currentColor;">19:04:22</div>
<div class="t " style="left:2298.70px;top:746.82px;font-size:23.84px;line-height:23.84px;letter-spacing:2.074px;color:#111827;-webkit-text-stroke:0.35px currentColor;">2025-09-18</div>
<div class="t " style="left:2298.70px;top:780.22px;font-size:23.84px;line-height:23.84px;letter-spacing:1.030px;color:#111827;-webkit-text-stroke:0.35px currentColor;">19:04:23</div>
<div class="t " style="left:2550.80px;top:763.32px;font-size:23.84px;line-height:23.84px;letter-spacing:0.000px;color:#111827;-webkit-text-stroke:0.35px currentColor;">1</div>
<div class="t " style="left:2724.00px;top:763.32px;font-size:23.84px;line-height:23.84px;letter-spacing:0.882px;color:#111827;-webkit-text-stroke:0.35px currentColor;">default_pool</div>
<div class="r" style="left:2906px;top:753.5px;width:89px;height:40px;overflow:hidden">
<div class="t " style="left:0.00px;top:9.82px;font-size:23.84px;line-height:23.84px;letter-spacing:0.000px;color:#111827;-webkit-text-stroke:0.35px currentColor;letter-spacing:0.5px;">@task</div>
</div>
<div class="t " style="left:1182.00px;top:873.17px;font-size:24.60px;line-height:24.60px;letter-spacing:0.374px;color:#2a5bf0;font-weight:700;">create_employees_table</div>
<div class="r" style="left:1826.60px;top:863.80px;width:157.90px;height:41.60px;background:#05701a;border-radius:21px;"></div>
<svg class="ov" width="3004" height="1708" viewBox="0 0 3004 1708"><path d="M1845.0 883.9 L1852.5 890.9 L1864.8 877.0" stroke="#fff" stroke-width="2.0" fill="none" stroke-linecap="round" stroke-linejoin="round"/></svg>
<div class="t " style="left:1875.40px;top:874.21px;font-size:23.26px;line-height:23.26px;letter-spacing:1.018px;color:#ffffff;-webkit-text-stroke:0.35px currentColor;">Success</div>
<div class="t " style="left:2035.00px;top:856.62px;font-size:23.84px;line-height:23.84px;letter-spacing:2.074px;color:#111827;-webkit-text-stroke:0.35px currentColor;">2025-09-18</div>
<div class="t " style="left:2035.00px;top:890.82px;font-size:23.84px;line-height:23.84px;letter-spacing:1.030px;color:#111827;-webkit-text-stroke:0.35px currentColor;">19:04:21</div>
<div class="t " style="left:2298.70px;top:856.62px;font-size:23.84px;line-height:23.84px;letter-spacing:2.074px;color:#111827;-webkit-text-stroke:0.35px currentColor;">2025-09-18</div>
<div class="t " style="left:2298.70px;top:890.82px;font-size:23.84px;line-height:23.84px;letter-spacing:1.030px;color:#111827;-webkit-text-stroke:0.35px currentColor;">19:04:21</div>
<div class="t " style="left:2550.80px;top:873.82px;font-size:23.84px;line-height:23.84px;letter-spacing:0.000px;color:#111827;-webkit-text-stroke:0.35px currentColor;">1</div>
<div class="t " style="left:2724.00px;top:873.82px;font-size:23.84px;line-height:23.84px;letter-spacing:0.882px;color:#111827;-webkit-text-stroke:0.35px currentColor;">default_pool</div>
<div class="r" style="left:2906px;top:864px;width:89px;height:40px;overflow:hidden">
<div class="t " style="left:0.00px;top:9.82px;font-size:23.84px;line-height:23.84px;letter-spacing:0.000px;color:#111827;-webkit-text-stroke:0.35px currentColor;letter-spacing:0.5px;">SQLExecuteQueryOperator</div>
</div>
<div class="t " style="left:1182.00px;top:967.77px;font-size:24.60px;line-height:24.60px;letter-spacing:0.419px;color:#2a5bf0;font-weight:700;">create_employees_temp_ta</div>
<div class="r" style="left:1826.60px;top:974.70px;width:157.90px;height:40.90px;background:#05701a;border-radius:21px;"></div>
<svg class="ov" width="3004" height="1708" viewBox="0 0 3004 1708"><path d="M1845.0 994.5 L1852.5 1001.5 L1864.8 987.6" stroke="#fff" stroke-width="2.0" fill="none" stroke-linecap="round" stroke-linejoin="round"/></svg>
<div class="t " style="left:1875.40px;top:984.76px;font-size:23.26px;line-height:23.26px;letter-spacing:1.018px;color:#ffffff;-webkit-text-stroke:0.35px currentColor;">Success</div>
<div class="t " style="left:2035.00px;top:967.52px;font-size:23.84px;line-height:23.84px;letter-spacing:2.074px;color:#111827;-webkit-text-stroke:0.35px currentColor;">2025-09-18</div>
<div class="t " style="left:2035.00px;top:1000.82px;font-size:23.84px;line-height:23.84px;letter-spacing:1.030px;color:#111827;-webkit-text-stroke:0.35px currentColor;">19:04:21</div>
<div class="t " style="left:2298.70px;top:967.52px;font-size:23.84px;line-height:23.84px;letter-spacing:2.074px;color:#111827;-webkit-text-stroke:0.35px currentColor;">2025-09-18</div>
<div class="t " style="left:2298.70px;top:1000.82px;font-size:23.84px;line-height:23.84px;letter-spacing:1.030px;color:#111827;-webkit-text-stroke:0.35px currentColor;">19:04:21</div>
<div class="t " style="left:2550.80px;top:984.32px;font-size:23.84px;line-height:23.84px;letter-spacing:0.000px;color:#111827;-webkit-text-stroke:0.35px currentColor;">1</div>
<div class="t " style="left:2724.00px;top:984.32px;font-size:23.84px;line-height:23.84px;letter-spacing:0.882px;color:#111827;-webkit-text-stroke:0.35px currentColor;">default_pool</div>
<div class="r" style="left:2906px;top:974.5px;width:89px;height:40px;overflow:hidden">
<div class="t " style="left:0.00px;top:9.82px;font-size:23.84px;line-height:23.84px;letter-spacing:0.000px;color:#111827;-webkit-text-stroke:0.35px currentColor;letter-spacing:0.5px;">SQLExecuteQueryOperator</div>
</div>
<div class="t " style="left:1182.00px;top:1001.57px;font-size:24.60px;line-height:24.60px;letter-spacing:0.000px;color:#2a5bf0;font-weight:700;">ble</div>
<div class="r" style="left:1147.00px;top:900.00px;width:32.00px;height:40.70px;background:#a3aebb;border-radius:0 20.4px 20.4px 0;box-shadow:2px 2px 6px rgba(0,0,0,0.12);"></div>
<svg class="ov" width="3004" height="1708" viewBox="0 0 3004 1708"><path d="M1154.8 912 L1163.8 920.5 L1154.8 929.5" fill="none" stroke="#fff" stroke-width="3" stroke-linecap="round" stroke-linejoin="round"/></svg>
</body></html>
